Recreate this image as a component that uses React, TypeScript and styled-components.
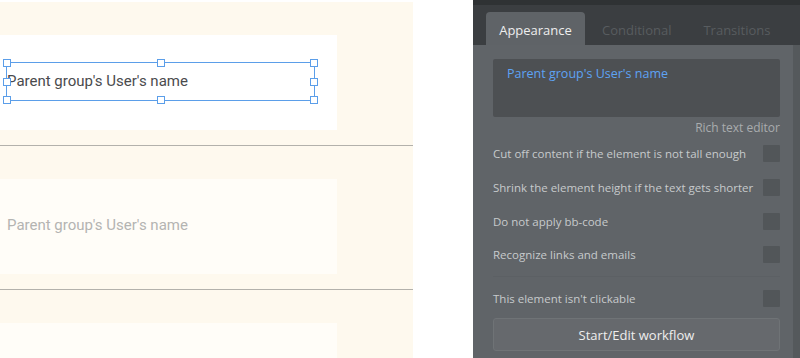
import React from "react";
import styled, { createGlobalStyle } from "styled-components";

const GlobalStyle = createGlobalStyle`
  html, body {
    margin: 0;
    padding: 0;
    background: #ffffff;
  }
  #root {
    width: 800px;
    height: 358px;
    overflow: hidden;
  }
`;

const Screen = styled.div`
  display: flex;
  width: 800px;
  height: 358px;
  overflow: hidden;
`;

const CanvasArea = styled.div`
  width: 473px;
  flex-shrink: 0;
  background: #ffffff;
  padding-top: 2px;
  box-sizing: border-box;
`;

const Canvas = styled.div`
  width: 413px;
  height: 356px;
  background: #fef9ee;
  overflow: hidden;
`;

const Cell = styled.div`
  padding: 33px 0 15px;
  border-bottom: 1px solid #b3b1ab;
`;

const Card = styled.div<{ $faded?: boolean }>`
  width: 337px;
  height: 95px;
  background: ${(p) => (p.$faded ? "#fffdf8" : "#ffffff")};
  display: flex;
  align-items: center;
  position: relative;
`;

const CardText = styled.span<{ $faded?: boolean }>`
  font-family: Roboto, "Liberation Sans", sans-serif;
  font-size: 15px;
  color: ${(p) => (p.$faded ? "#b4b4b2" : "#4a4b4d")};
  margin-left: 7px;
  margin-top: -3px;
`;

const Selection = styled.div`
  position: absolute;
  left: 6px;
  top: 27px;
  width: 309px;
  height: 39px;
  border: 1.5px solid #5b9ee9;
  box-sizing: border-box;
`;

const Handle = styled.div<{ $x: string; $y: string }>`
  position: absolute;
  width: 6px;
  height: 6px;
  background: #ffffff;
  border: 1.5px solid #5b9ee9;
  left: ${(p) => p.$x};
  top: ${(p) => p.$y};
  transform: translate(-50%, -50%);
`;

const Panel = styled.div`
  width: 327px;
  flex-shrink: 0;
  display: flex;
  flex-direction: column;
  background: #606468;
  font-family: "Open Sans", "Liberation Sans", sans-serif;
`;

const TopStrip = styled.div`
  height: 5px;
  flex-shrink: 0;
  background: #2f3234;
`;

const TabBar = styled.div`
  height: 40px;
  flex-shrink: 0;
  background: #3b3e41;
  display: flex;
  align-items: flex-end;
  padding-left: 13px;
`;

const Tab = styled.div<{ $active?: boolean }>`
  height: 33px;
  box-sizing: border-box;
  padding-top: 3px;
  width: ${(p) => (p.$active ? "99px" : "auto")};
  padding-left: ${(p) => (p.$active ? "0" : "16px")};
  padding-right: ${(p) => (p.$active ? "0" : "16px")};
  margin-right: ${(p) => (p.$active ? "1px" : "0")};
  border-radius: 4px 4px 0 0;
  background: ${(p) => (p.$active ? "#5f6367" : "transparent")};
  color: ${(p) => (p.$active ? "#eeeeee" : "#585c5f")};
  font-size: 13px;
  display: flex;
  align-items: center;
  justify-content: center;
`;

const BodyRow = styled.div`
  flex: 1;
  display: flex;
  min-height: 0;
`;

const Body = styled.div`
  flex: 1;
  min-width: 0;
  padding: 14px 13px 0 20px;
  display: flex;
  flex-direction: column;
`;

const Scrollbar = styled.div`
  width: 7px;
  flex-shrink: 0;
  background: #55595c;
`;

const TextBox = styled.div`
  height: 58px;
  flex-shrink: 0;
  background: #4d5053;
  border-radius: 2px;
  padding: 6px 14px;
  box-sizing: border-box;
  color: #5ea3f3;
  font-size: 12.5px;
`;

const Hint = styled.div`
  text-align: right;
  font-size: 12px;
  color: #a9acae;
  margin-top: 2px;
  height: 18px;
  line-height: 18px;
`;

const OptionRow = styled.div`
  height: 33.7px;
  flex-shrink: 0;
  display: flex;
  align-items: center;
  justify-content: space-between;
  font-size: 11.5px;
  color: #c7cacc;
  white-space: nowrap;
`;

const CheckBox = styled.div`
  width: 17px;
  height: 17px;
  flex-shrink: 0;
  background: #525659;
  border-radius: 1px;
`;

const Divider = styled.div`
  height: 1px;
  flex-shrink: 0;
  background: #5c6064;
  margin: 4px 0 5px;
`;

const WorkflowButton = styled.div`
  margin-top: 3px;
  height: 33px;
  flex-shrink: 0;
  border: 1px solid #6f7376;
  border-radius: 3px;
  background: #66696d;
  color: #eeeeee;
  font-size: 13px;
  display: flex;
  align-items: center;
  justify-content: center;
  box-sizing: border-box;
`;

const handles = [
  ["0%", "0%"],
  ["50%", "0%"],
  ["100%", "0%"],
  ["0%", "50%"],
  ["100%", "50%"],
  ["0%", "100%"],
  ["50%", "100%"],
  ["100%", "100%"],
];

const options = [
  "Cut off content if the element is not tall enough",
  "Shrink the element height if the text gets shorter",
  "Do not apply bb-code",
  "Recognize links and emails",
];

const App = () => {
  return (
    <>
      <GlobalStyle />
      <Screen>
        <CanvasArea>
          <Canvas>
            <Cell>
              <Card>
                <CardText>Parent group's User's name</CardText>
                <Selection>
                  {handles.map(([x, y]) => (
                    <Handle key={x + y} $x={x} $y={y} />
                  ))}
                </Selection>
              </Card>
            </Cell>
            <Cell>
              <Card $faded>
                <CardText $faded>Parent group's User's name</CardText>
              </Card>
            </Cell>
            <Cell>
              <Card $faded />
            </Cell>
          </Canvas>
        </CanvasArea>
        <Panel>
          <TopStrip />
          <TabBar>
            <Tab $active>Appearance</Tab>
            <Tab>Conditional</Tab>
            <Tab>Transitions</Tab>
          </TabBar>
          <BodyRow>
            <Body>
              <TextBox>Parent group's User's name</TextBox>
              <Hint>Rich text editor</Hint>
              {options.map((o) => (
                <OptionRow key={o}>
                  {o}
                  <CheckBox />
                </OptionRow>
              ))}
              <Divider />
              <OptionRow>
                This element isn't clickable
                <CheckBox />
              </OptionRow>
              <WorkflowButton>Start/Edit workflow</WorkflowButton>
            </Body>
            <Scrollbar />
          </BodyRow>
        </Panel>
      </Screen>
    </>
  );
};

export default App;
